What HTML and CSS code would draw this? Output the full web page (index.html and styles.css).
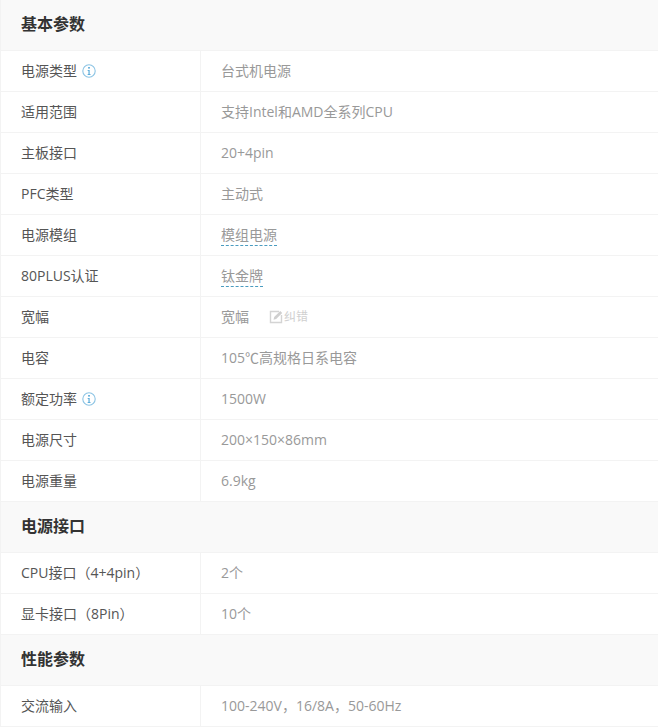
FILE: index.html
```html
<!DOCTYPE html>
<html lang="zh-CN">
<head>
<meta charset="utf-8">
<title>参数</title>
<link rel="stylesheet" href="styles.css">
</head>
<body>
<svg class="defs" width="0" height="0" aria-hidden="true">
<symbol id="info" viewBox="0 0 14 14"><circle cx="7" cy="7" r="6.2" fill="none" stroke="#8cc4e4" stroke-width="1.1"/><rect x="6.2" y="3" width="1.6" height="1.6" fill="#4ba3d6"/><path d="M5.6 5.9H7.6V10.2H8.6V11H5.6V10.2H6.5V6.7H5.6Z" fill="#4ba3d6"/></symbol>
</svg>
<div class="params">
  <h3 class="head">基本参数</h3>
  <div class="row"><div class="key">电源类型<svg class="info"><use href="#info"/></svg></div><div class="val">台式机电源</div></div>
  <div class="row"><div class="key">适用范围</div><div class="val">支持Intel和AMD全系列CPU</div></div>
  <div class="row"><div class="key">主板接口</div><div class="val">20+4pin</div></div>
  <div class="row"><div class="key">PFC类型</div><div class="val">主动式</div></div>
  <div class="row"><div class="key">电源模组</div><div class="val"><span class="link">模组电源</span></div></div>
  <div class="row"><div class="key">80PLUS认证</div><div class="val"><span class="link">钛金牌</span></div></div>
  <div class="row"><div class="key">宽幅</div><div class="val">宽幅<span class="fix"><svg class="edit" viewBox="0 0 14 14"><path d="M10 1.5H1.5V12.5H12.5V5" fill="none" stroke="#d4d4d4" stroke-width="1.4"/><path d="M4.5 9.8L5.2 7L11.3 1L13.2 2.9L7.2 9Z" fill="#cfcfcf"/></svg>纠错</span></div></div>
  <div class="row"><div class="key">电容</div><div class="val">105℃高规格日系电容</div></div>
  <div class="row"><div class="key">额定功率<svg class="info"><use href="#info"/></svg></div><div class="val">1500W</div></div>
  <div class="row"><div class="key">电源尺寸</div><div class="val">200×150×86mm</div></div>
  <div class="row"><div class="key">电源重量</div><div class="val">6.9kg</div></div>
  <h3 class="head">电源接口</h3>
  <div class="row"><div class="key">CPU接口（4+4pin）</div><div class="val">2个</div></div>
  <div class="row"><div class="key">显卡接口（8Pin）</div><div class="val">10个</div></div>
  <h3 class="head">性能参数</h3>
  <div class="row"><div class="key">交流输入</div><div class="val">100-240V，16/8A，50-60Hz</div></div>
</div>
</body>
</html>
```
FILE: styles.css
```css
html, body {
  margin: 0;
  padding: 0;
  background: #fff;
  overflow: hidden;
}
body {
  font-family: "Open Sans", "Noto Sans CJK SC", sans-serif;
  font-size: 14px;
}
.defs {
  position: absolute;
}
.params {
  border-left: 1px solid #f3f3f3;
}
.head {
  margin: 0;
  height: 50px;
  line-height: 49px;
  padding-left: 20px;
  background: #f9f9f9;
  border-bottom: 1px solid #f3f3f3;
  font-size: 16px;
  font-weight: 700;
  color: #333;
}
.row {
  display: flex;
  height: 41px;
  box-sizing: border-box;
  border-bottom: 1px solid #f3f3f3;
  line-height: 40px;
}
.key {
  width: 200px;
  box-sizing: border-box;
  padding-left: 20px;
  border-right: 1px solid #f3f3f3;
  color: #555;
  display: flex;
  align-items: center;
}
.val {
  padding-left: 20px;
  color: #999;
  display: flex;
  align-items: center;
}
.info {
  width: 14px;
  height: 14px;
  margin-left: 5px;
}
.link {
  line-height: 20px;
  border-bottom: 1px dashed #4a9cc0;
}
.fix {
  display: flex;
  align-items: center;
  margin-left: 20px;
  font-size: 12px;
  color: #d0d0d0;
}
.edit {
  width: 14px;
  height: 14px;
  margin-right: 1px;
}
```
